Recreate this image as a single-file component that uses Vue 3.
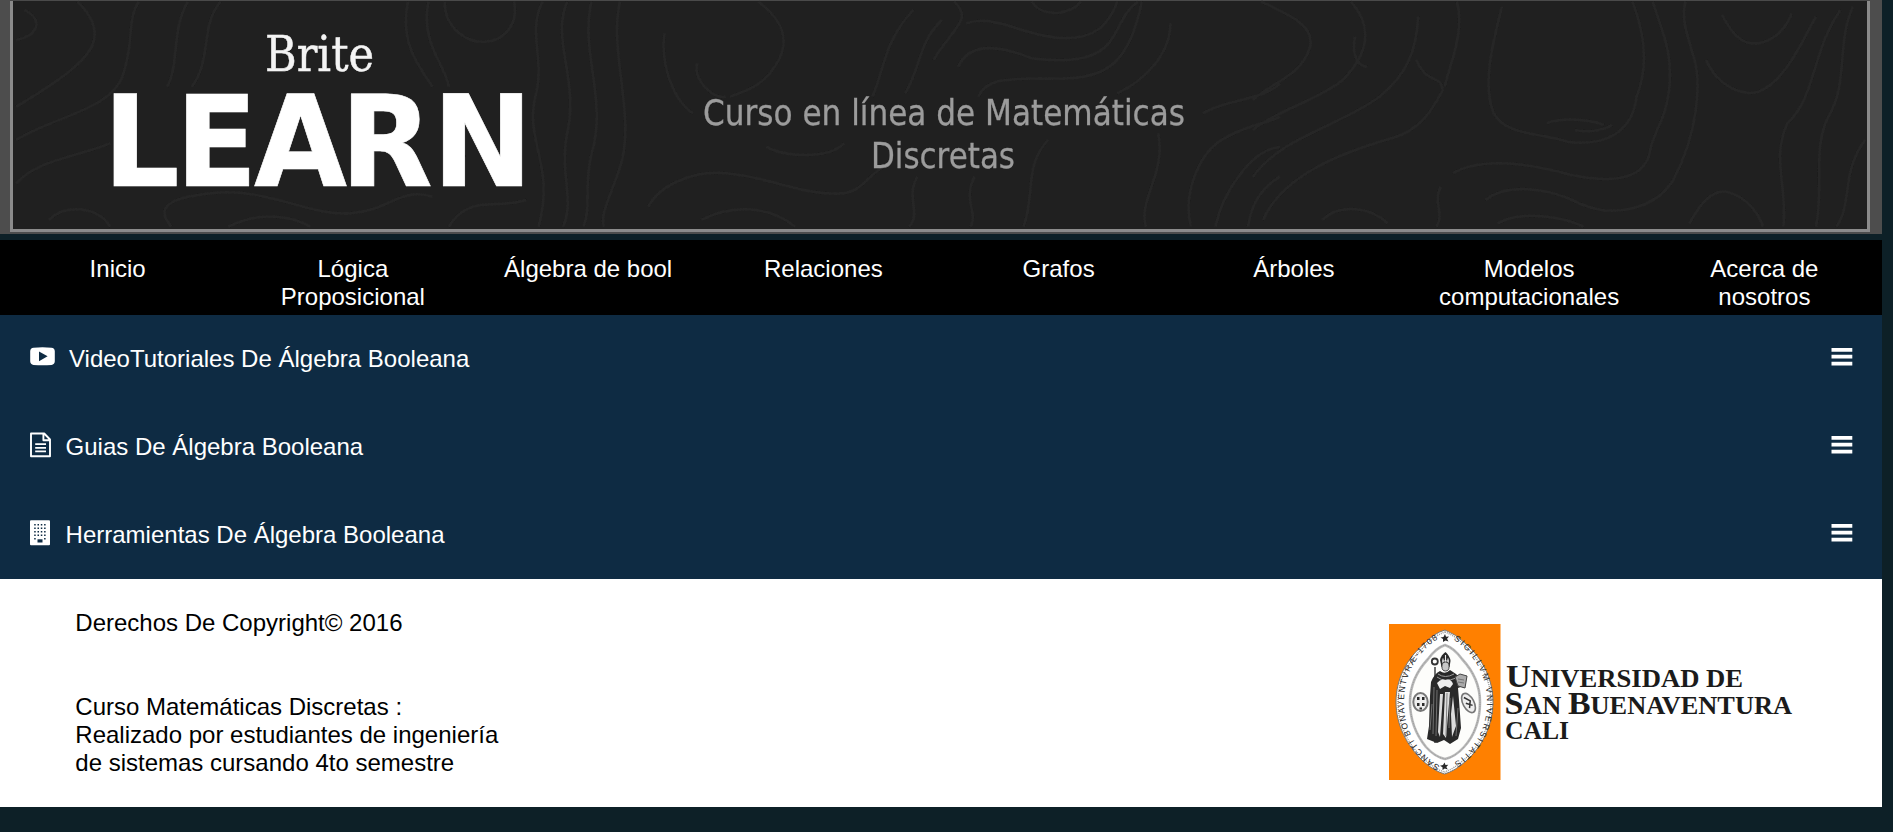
<script setup>
const navItems = [
  'Inicio',
  'Lógica Proposicional',
  'Álgebra de bool',
  'Relaciones',
  'Grafos',
  'Árboles',
  'Modelos computacionales',
  'Acerca de nosotros',
]

const sections = [
  { icon: 'video', title: 'VideoTutoriales De Álgebra Booleana' },
  { icon: 'file', title: 'Guias De Álgebra Booleana' },
  { icon: 'building', title: 'Herramientas De Álgebra Booleana' },
]

const windows = []
for (let r = 0; r < 5; r++) {
  for (let c = 0; c < 4; c++) {
    if (r === 4 && (c === 1 || c === 2)) continue
    windows.push({ x: 4.2 + c * 3.3, y: 4 + r * 3.5 })
  }
}
</script>

<template>
  <div class="page">
    <header class="banner">
      <svg width="1882" height="234" viewBox="0 0 1882 234">
        <defs>
          <filter id="soft" x="-5%" y="-5%" width="110%" height="110%">
            <feGaussianBlur stdDeviation="0.7" />
          </filter>
        </defs>
        <rect width="1882" height="234" fill="#4d4d4d" />
        <rect x="10" y="-4" width="1860" height="236" fill="#8b8b8b" />
        <rect x="13" y="1" width="1854" height="228" fill="#202020" />
        <rect x="10" width="1860" height="1" fill="#4a4a4a" />
        <g class="contours" filter="url(#soft)">
          <g transform="scale(.408 .3333)">
            <path d="M40 320C120 260 200 200 225 140C245 90 220 40 190 5M40 420C130 350 270 330 300 230C330 130 310 60 340 5M40 550C90 480 190 470 270 430M40 120C90 110 110 60 60 30M120 660C160 610 240 620 270 680M420 680C370 610 440 590 520 580C650 560 760 650 860 640C960 630 980 560 1060 590M560 680C640 630 720 650 760 680M460 5C420 90 440 190 410 260M540 5C490 80 520 180 470 260M1090 5C1090 90 1150 130 1190 125C1240 120 1270 70 1260 5M1050 5C1030 130 1090 190 1100 260M1000 5C980 120 1020 190 1060 260M1330 5C1290 100 1340 180 1310 300C1290 430 1360 500 1320 680M1390 5C1350 120 1420 240 1390 400C1370 520 1410 600 1380 680M1450 5C1420 150 1490 300 1450 460C1430 560 1450 620 1430 680M1520 5C1490 150 1560 350 1520 500C1500 580 1470 640 1480 680M1290 600C1220 630 1150 580 1100 680" />
          </g>
          <g transform="translate(640 0) scale(.408 .3333)">
            <path d="M290 5C340 50 370 110 340 180C310 250 270 270 220 290M60 100C50 190 80 300 130 340M140 190C130 240 180 300 210 290M20 620C50 550 140 510 210 520C320 530 400 590 500 580C550 570 560 520 600 500M150 660C230 610 320 620 380 680M310 440C350 470 460 480 500 430M670 30C600 120 600 200 570 290M740 60C680 130 690 200 650 280M770 5C820 60 760 90 720 180M800 70C870 40 940 110 1040 115C1120 115 1150 70 1170 5M780 200C810 120 890 140 960 175C1050 190 1130 180 1160 110C1180 70 1190 30 1220 5M830 290C850 220 950 240 1050 235C1150 230 1200 180 1230 5M960 5C990 60 1060 40 1080 5M1300 70C1300 160 1240 240 1170 280M1380 340C1430 300 1530 300 1568 250M1000 420C940 500 970 580 940 680M1350 680C1330 580 1370 450 1440 410C1500 370 1540 370 1568 350M1410 680C1430 570 1500 450 1568 440M1270 400C1290 520 1220 600 1240 680M680 530C650 590 690 640 660 680M820 530C790 600 830 640 810 680M1490 680C1500 600 1530 560 1568 530" />
          </g>
          <g transform="translate(1253 0) scale(.408 .3333)">
            <path d="M20 5C100 50 150 80 140 140C120 230 40 250 0 300M240 5C280 60 300 140 220 240C160 300 60 330 0 390M405 50C400 150 380 220 310 290C210 380 70 410 0 530M250 110C240 170 260 200 280 200M400 180C430 260 460 220 465 270C440 330 410 390 340 415C210 460 70 530 25 660M500 5C520 100 480 200 470 260M610 20C590 120 560 250 590 340C620 410 720 400 770 425C860 440 930 400 940 290C970 200 960 100 930 5M490 520C560 470 680 490 780 525C880 550 950 540 970 470C980 390 1010 370 1020 270C1030 150 1000 90 980 5M570 600C620 550 720 560 800 610C890 660 990 620 1030 540C1090 400 1100 250 1080 170C1060 90 1050 50 1060 5M600 670C660 630 760 650 810 680M1110 180C1140 260 1200 290 1240 275C1310 240 1350 110 1380 50M1150 45C1180 120 1210 135 1240 130C1280 120 1310 80 1320 40M1070 670C1100 600 1130 570 1160 575C1210 590 1240 640 1250 680M1440 30C1370 150 1380 290 1310 370C1270 470 1310 560 1300 680M1470 20C1430 130 1460 250 1410 350C1370 450 1400 560 1380 680M1500 420C1440 520 1470 610 1430 680M170 660C210 610 290 620 330 670M460 560C440 610 470 640 450 680M720 370C760 350 830 360 860 375M790 390C820 400 860 390 880 375" />
          </g>
        </g>
        <g filter="url(#soft)">
          <text class="brand-top" x="265" y="71" textLength="109" lengthAdjust="spacingAndGlyphs">Brite</text>
          <text class="brand" transform="scale(1.06 1)" x="97.100 165.500 239.600 321.100 407.900" y="186.300">LEARN</text>
          <text class="tagline" x="703" y="125" textLength="482" lengthAdjust="spacingAndGlyphs">Curso en línea de Matemáticas</text>
          <text class="tagline" x="871" y="168" textLength="144" lengthAdjust="spacingAndGlyphs">Discretas</text>
        </g>
      </svg>
    </header>

    <nav class="nav">
      <a v-for="item in navItems" :key="item" class="nav-item">{{ item }}</a>
    </nav>

    <main class="panel">
      <section v-for="s in sections" :key="s.icon" class="row">
        <svg v-if="s.icon === 'video'" class="icon icon-video" width="25" height="26" viewBox="0 0 25 26">
          <path fill="#fff" fill-rule="evenodd" d="M3.500 3.800Q12.500 2.800 21.500 3.800Q24.600 4.200 24.800 7.200V17.200Q24.600 20.500 21.500 20.900Q12.500 21.500 3.500 20.900Q.400 20.500 .200 17.200V7.200Q.400 4.200 3.500 3.800ZM9 7.400V17.200L17.600 12.200Z" />
        </svg>
        <svg v-else-if="s.icon === 'file'" class="icon icon-file" width="22" height="26" viewBox="0 0 22 26">
          <path fill="none" stroke="#fff" stroke-width="1.900" stroke-linejoin="round" d="M1 1.500H14.200L20 7.500V24.200H1ZM13.400 1.500V8.300H20" />
          <path stroke="#fff" stroke-width="1.700" d="M5.200 12.200H16M5.200 15.800H16M5.200 19.400H16" />
        </svg>
        <svg v-else class="icon icon-building" width="22" height="26" viewBox="0 0 22 26">
          <rect x="0" y=".300" width="20" height="25" rx="1" fill="#fff" />
          <rect v-for="(w, i) in windows" :key="i" :x="w.x" :y="w.y" width="1.500" height="1.500" fill="#0e2b43" />
          <rect x="7.500" y="19.300" width="5" height="3.200" fill="#0e2b43" />
        </svg>
        <span class="row-title">{{ s.title }}</span>
        <svg class="burger" width="22" height="20" viewBox="0 0 22 20">
          <path fill="#fff" d="M.5 .9H21.300V4.700H.5ZM.5 7.800H21.300V11.600H.5ZM.5 14.700H21.300V18.500H.5Z" />
        </svg>
      </section>
    </main>

    <footer class="footer">
      <div class="credits">
        <p>Derechos De Copyright© 2016</p>
        <p class="about">
          Curso Matemáticas Discretas :<br />Realizado por estudiantes de ingeniería<br />de sistemas cursando 4to semestre
        </p>
      </div>
      <svg class="university" width="412" height="156" viewBox="0 0 412 156">
        <defs>
          <path id="leftArc" d="M51 142C30 130 15 108 15 78C15 48 30 25 54 12" />
          <path id="rightArc" d="M62 14C84 28 98 50 98 78C98 107 84 128 60 142" />
        </defs>
        <rect width="111.500" height="156" fill="#ff8000" />
        <path d="M56 6Q67 10 77 20C94 35 104 56 104 78C104 101 93 123 77 137Q66 147 55.500 150Q45 147 34 137C18 122 7 101 7 78C7 56 17 35 35 20Q45 9 56 6Z" fill="#fff" stroke="#777" stroke-width="1" />
        <path d="M56 8Q67 12 76 22C92 37 102 56 102 78C102 101 91 122 76 135Q65 145 55.500 148Q46 145 35 135C19 121 9 101 9 78C9 56 19 37 36 22Q46 11 56 8Z" fill="none" stroke="#999" stroke-width="1.500" stroke-dasharray="1 1" />
        <path d="M56 21Q65 24 73 35C85 48 91 62 91 78C91 96 85 112 75 123Q66 133 56 135Q46 133 37 123C28 112 21 96 21 78C21 62 27 48 39 35Q47 24 56 21Z" fill="#fdfdfb" stroke="#bbb" stroke-width="2.600" />
        <path d="M56 21Q65 24 73 35C85 48 91 62 91 78C91 96 85 112 75 123Q66 133 56 135Q46 133 37 123C28 112 21 96 21 78C21 62 27 48 39 35Q47 24 56 21Z" fill="none" stroke="#888" stroke-width=".7" stroke-dasharray="1 .8" />
        <text class="motto"><textPath href="#leftArc" textLength="152">SANCTI BONAVENTVRÆ-1708</textPath></text>
        <text class="motto"><textPath href="#rightArc" startOffset="3" textLength="146">SIGILLVM VNIVERSITATIS</textPath></text>
        <path class="ink" d="M56 10l1 2.800 3-.3-2 2.300 1.500 2.700-3-.9-2.500 1.500v-3l-2.500-1.500 3-.7zM55.500 138.500l1 2.500 2.800-.3-2 2.300 1.500 2.500-3-.9-2.300 1.500v-2.800l-2.500-1.500 3-.7z" />

        <path d="M46 43V119" stroke="#333" stroke-width="1.400" />
        <circle cx="45.800" cy="37.500" r="3" fill="none" stroke="#333" stroke-width="1.800" />
        <path class="ink" d="M51 36Q52 31 56.500 28Q61 32 61.500 37L60.500 43H52.500Z" />
        <path d="M56.500 31V41M53 37H60M54 34.500V40M59 34.500V40" stroke="#eee" stroke-width="1.100" />
        <ellipse cx="56.500" cy="42.500" rx="3.600" ry="4.500" fill="#c8c8c8" stroke="#222" stroke-width=".8" />
        <path class="ink" d="M51 47Q56 51 61 46L67 50Q72 54 74 62L69 64L70 76L72 104L69 115L61 120L55 116L48 119L38 115L40 102L41 72L42 58Q45 50 51 47Z" />
        <path d="M49 50Q56 55 65 50M48 53Q56 59 67 54" fill="none" stroke="#999" stroke-width="1" />
        <path d="M48 59Q52 54 56 56Q62 54 64 60L61 64L56 62L51 65Z" fill="#eee" />
        <path d="M51 70L49 108L51 113L54 70ZM56 68L54 110L57 114L61 68ZM64 72L67 102L63 113L62 90Z" fill="#ddd" />
        <path d="M45 63L44 110M48 66L47 112M58 69L57 112M61 74L60 104M69 84L67 112M43 80L41 106" fill="none" stroke="#777" stroke-width=".9" />
        <path d="M66 53L71 50L78 52L76 64L69 62Z" fill="#aaa" stroke="#444" />
        <path d="M69 55L75 56M69 58L75 59" stroke="#666" stroke-width=".8" />
        <ellipse cx="31.500" cy="78" rx="7.200" ry="9" fill="#eee" stroke="#777" stroke-width="2" />
        <path class="ink" d="M28 73h2.500v3h-2.500zM33 73h2.500v3h-2.500zM28 79h2.500v3h-2.500zM33 79h2.500v3h-2.500zM30.500 83.500h2.500v2h-2.500z" />
        <g transform="rotate(-28 79.500 79)">
          <ellipse cx="79.500" cy="79" rx="5.500" ry="10.500" fill="#eee" stroke="#777" stroke-width="1.600" />
          <path d="M78 72L82 78L78 84M77 78L82 83" fill="none" stroke="#333" stroke-width="1.500" />
        </g>

        <g class="uni-name">
          <text x="117" y="62.700" textLength="237" lengthAdjust="spacingAndGlyphs"><tspan class="cap">U</tspan>NIVERSIDAD DE</text>
          <text x="115.500" y="90" textLength="287.500" lengthAdjust="spacingAndGlyphs"><tspan class="cap">S</tspan>AN <tspan class="cap">B</tspan>UENAVENTURA</text>
          <text x="116" y="115.200" textLength="64" lengthAdjust="spacingAndGlyphs">CALI</text>
        </g>
      </svg>
    </footer>
  </div>
</template>

<style>
body {
  margin: 0;
  background: #0d2027;
}
</style>

<style scoped>
.page {
  width: 1882px;
  height: 832px;
  font-family: "Liberation Sans", Arial, sans-serif;
  font-size: 24px;
  line-height: 28px;
}
.banner {
  height: 234px;
  margin-bottom: 6px;
}
.banner svg {
  display: block;
}
.contours {
  fill: none;
  stroke: #262626;
  stroke-width: 2.500;
}
.contours path {
  vector-effect: non-scaling-stroke;
}
.brand-top {
  font-family: "DejaVu Serif", serif;
  font-size: 49px;
  fill: #f4f4f4;
  stroke: #f4f4f4;
  stroke-width: 0.500;
}
.brand {
  font-family: "DejaVu Sans Condensed", "DejaVu Sans", sans-serif;
  font-stretch: semi-condensed;
  font-weight: 700;
  font-size: 126px;
  fill: #fff;
  stroke: #fff;
  stroke-width: 0.600;
}
.tagline {
  font-family: "DejaVu Sans", sans-serif;
  font-size: 35px;
  fill: #9c9c9c;
  stroke: #9c9c9c;
  stroke-width: 0.300;
}
.nav {
  display: grid;
  grid-template-columns: repeat(8, minmax(0, 1fr));
  height: 75px;
  box-sizing: border-box;
  padding-top: 15px;
  background: #000;
  color: #fff;
  text-align: center;
}
.nav-item {
  padding: 0 26px;
}
.panel {
  background: #0e2b43;
  color: #fff;
}
.row {
  display: flex;
  align-items: flex-start;
  box-sizing: border-box;
  height: 88px;
  padding: 29px 29px 0 30px;
}
.icon {
  flex: none;
}
.icon-video {
  margin-right: 14px;
}
.icon-file,
.icon-building {
  margin-right: 13.600px;
}
.row-title {
  padding-top: 1px;
}
.burger {
  margin: 2.500px 0 0 auto;
}
.footer {
  display: flex;
  justify-content: space-between;
  box-sizing: border-box;
  height: 228px;
  padding: 30px 81px 0 75.300px;
  background: #fff;
  color: #000;
}
.credits p {
  margin: 0;
}
.credits .about {
  margin-top: 56px;
}
.university {
  margin-top: 15px;
}
.motto {
  font-family: "Liberation Sans", Arial, sans-serif;
  font-size: 8.500px;
  fill: #222;
}
.ink {
  fill: #292929;
}
.uni-name {
  font-family: "Liberation Serif", "Times New Roman", serif;
  font-weight: 700;
  font-size: 24.500px;
  fill: #1b1b1b;
}
.cap {
  font-size: 31.500px;
}
</style>
